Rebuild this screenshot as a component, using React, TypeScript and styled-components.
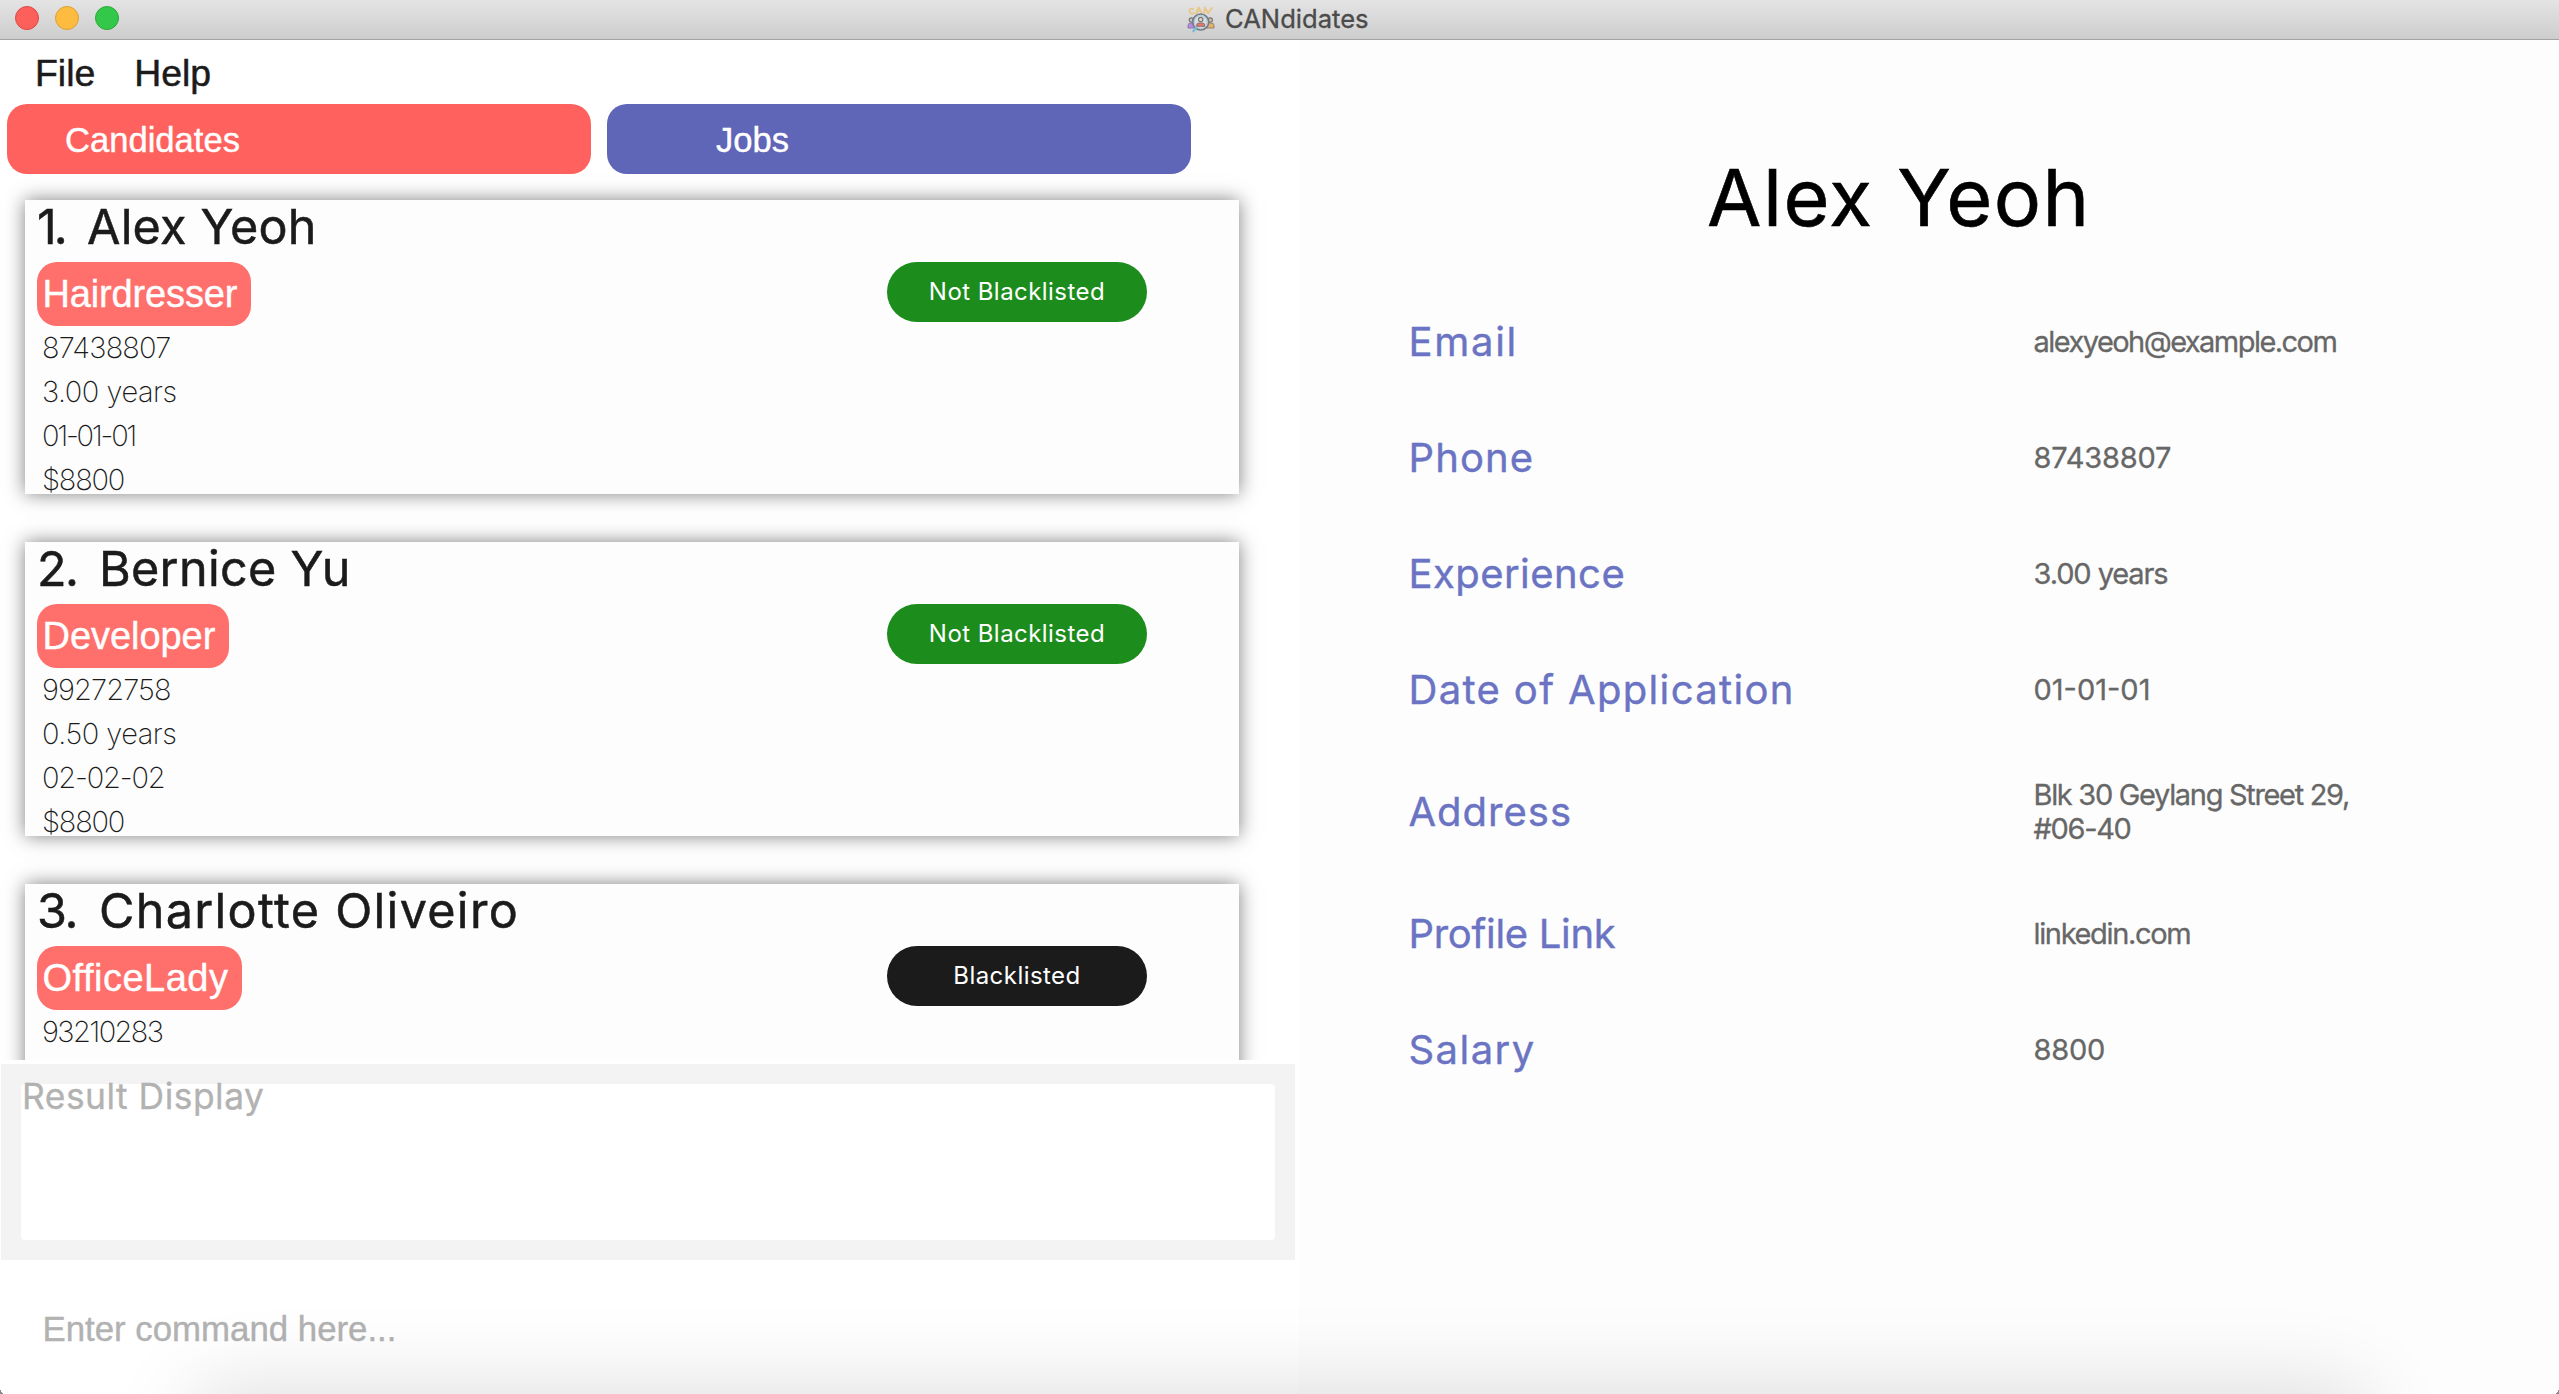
import React from "react";
import styled, { createGlobalStyle } from "styled-components";

const GlobalStyle = createGlobalStyle`
  * { box-sizing: border-box; }
  body { margin: 0; background: #fff; font-family: Inter, "Liberation Sans", sans-serif; }
`;

const sans = `"Liberation Sans", Arial, sans-serif`;

const Window = styled.div`
  position: relative;
  width: 2559px;
  height: 1394px;
  display: flex;
  flex-direction: column;
  overflow: hidden;
  background: #fff;
`;

const TitleBar = styled.header`
  flex: none;
  height: 40px;
  display: grid;
  grid-template-columns: 1187px auto 1fr;
  align-items: center;
  background: linear-gradient(#e4e4e4, #cdcdcd);
  border-bottom: 1px solid #a3a3a3;
`;

const Lights = styled.div`
  display: flex;
  gap: 16px;
  padding: 0 0 3px 15px;
`;

const Light = styled.span<{ $fill: string; $edge: string }>`
  width: 24px;
  height: 24px;
  border-radius: 50%;
  background: ${(p) => p.$fill};
  border: 1px solid ${(p) => p.$edge};
`;

const WindowTitle = styled.div`
  display: flex;
  align-items: center;
  gap: 10px;
  color: #4b4b4b;
  font-size: 25.6px;
  line-height: 38px;
  white-space: nowrap;
  padding-bottom: 1px;
  -webkit-text-stroke: 0.3px #4b4b4b;

  svg { display: block; }
`;

const Body = styled.div`
  flex: 1;
  min-height: 0;
  display: grid;
  grid-template-columns: 1299px 1fr;
`;

const LeftPane = styled.main`
  display: flex;
  flex-direction: column;
  min-height: 0;
`;

const MenuBar = styled.nav`
  flex: none;
  height: 64px;
  display: flex;
  gap: 39px;
  padding: 11px 0 0 35px;
  font-family: ${sans};
  font-size: 37.4px;
  line-height: 44px;
  color: #1b1b1b;
  -webkit-text-stroke: 0.5px #1b1b1b;
`;

const Tabs = styled.div`
  flex: none;
  display: flex;
  gap: 16px;
  padding-left: 7px;
`;

const Tab = styled.div<{ $color: string; $indent: number }>`
  width: 584px;
  height: 70px;
  border-radius: 20px;
  padding-left: ${(p) => p.$indent}px;
  background: ${(p) => p.$color};
  color: #fff;
  font-family: ${sans};
  font-size: 34.6px;
  line-height: 73px;
  -webkit-text-stroke: 0.4px #fff;
`;

const CardList = styled.section`
  flex: none;
  height: 886px;
  overflow: hidden;
  display: flex;
  flex-direction: column;
  gap: 48px;
  padding: 26px 60px 0 25px;
`;

const Card = styled.article`
  flex: none;
  height: 294px;
  display: grid;
  grid-template-columns: 1fr 260px;
  padding: 0 92px 0 12px;
  background: #fdfdfd;
  box-shadow: 0 0 18px rgba(0, 0, 0, 0.5);
`;

const Name = styled.h2<{ $tracking: number }>`
  margin: 0;
  height: 62px;
  display: flex;
  font-size: 48.5px;
  font-weight: 400;
  line-height: 53px;
  letter-spacing: ${(p) => p.$tracking}px;
  color: #1b1b1b;
  white-space: nowrap;
  -webkit-text-stroke: 0.5px #1b1b1b;
`;

const Index = styled.span<{ $narrow: boolean }>`
  flex: none;
  width: ${(p) => (p.$narrow ? 50 : 62)}px;
  letter-spacing: ${(p) => (p.$narrow ? -3 : -1.5)}px;
`;

const Tag = styled.div<{ $tracking: number }>`
  width: max-content;
  height: 64px;
  border-radius: 20px;
  padding: 0 14px 0 5.5px;
  background: #ff6f6b;
  color: #fff;
  font-family: ${sans};
  font-size: 38px;
  line-height: 65px;
  letter-spacing: ${(p) => p.$tracking}px;
  -webkit-text-stroke: 0.4px #fff;
`;

const Details = styled.ul`
  list-style: none;
  margin: 0;
  padding: 0 0 0 5px;
`;

const Detail = styled.li<{ $tracking: number }>`
  height: 44px;
  font-size: 29px;
  font-weight: 200;
  line-height: 44px;
  letter-spacing: ${(p) => p.$tracking}px;
  color: #1b1b1b;
`;

const Pill = styled.div<{ $blacklisted?: boolean; $tracking: number }>`
  height: 60px;
  margin-top: 62px;
  border-radius: 30px;
  background: ${(p) => (p.$blacklisted ? "#1b1b1b" : "#1c8d1c")};
  color: #fff;
  font-size: 24px;
  line-height: 60px;
  letter-spacing: ${(p) => p.$tracking}px;
  text-align: center;
`;

const ResultPanel = styled.section`
  flex: none;
  width: 1294px;
  height: 196px;
  margin: 4px 0 0 1px;
  padding: 20px;
  background: #f3f3f3;
`;

const ResultBox = styled.div`
  height: 156px;
  border-radius: 4px;
  padding-left: 1px;
  background: #fff;
  color: #b2b2b2;
  font-size: 35.4px;
  line-height: 26px;
  letter-spacing: 0.5px;
  -webkit-text-stroke: 0.3px #b2b2b2;
`;

const CommandLine = styled.div`
  flex: 1;
  padding: 46px 0 0 42.5px;
  color: #b2b2b2;
  font-family: ${sans};
  font-size: 34.8px;
  line-height: 46px;
  -webkit-text-stroke: 0.4px #b2b2b2;
`;

const DetailPane = styled.aside`
  background: #fdfdfd;
`;

const Title = styled.h1`
  margin: 0;
  height: 244px;
  padding: 107px 0 0 408px;
  color: #000;
  font-size: 79px;
  font-weight: 400;
  line-height: 100px;
  letter-spacing: 1.4px;
  -webkit-text-stroke: 0.6px #000;
`;

const Field = styled.div<{ $tall?: boolean }>`
  height: ${(p) => (p.$tall ? 128 : 116)}px;
  display: grid;
  grid-template-columns: 625px 380px;
  align-items: center;
  padding-left: 109.5px;
`;

const Label = styled.div<{ $tracking: number }>`
  color: #6b74c3;
  font-size: 40px;
  line-height: 50px;
  letter-spacing: ${(p) => p.$tracking}px;
  padding-bottom: 1px;
  -webkit-text-stroke: 0.4px #6b74c3;
`;

const Value = styled.div<{ $tracking: number }>`
  color: #676767;
  font-size: 29px;
  line-height: 34px;
  letter-spacing: ${(p) => p.$tracking}px;
  white-space: pre-line;
  -webkit-text-stroke: 0.3px #676767;
`;

const DockShadow = styled.div`
  position: absolute;
  left: 200px;
  right: 200px;
  top: 1394px;
  height: 200px;
  border-radius: 20px;
  pointer-events: none;
  box-shadow: 0 0 84px 8px rgba(0, 0, 0, 0.13);
`;

const Corner = styled.span<{ $side: "left" | "right" }>`
  position: absolute;
  bottom: 0;
  ${(p) => p.$side}: 0;
  width: 4px;
  height: 7px;
  background: radial-gradient(
    ellipse 100% 100% at ${(p) => (p.$side === "left" ? "100% 0" : "0 0")},
    transparent 96%,
    #8a8a8a 100%
  );
`;

const AppIcon = () => (
  <svg width="28" height="28" viewBox="0 0 28 28" fill="none">
    <g stroke="#e8c887" strokeWidth="1.9" strokeLinecap="round" strokeLinejoin="round">
      <path d="M6 4.2C3.6 3 1.6 4.800 2.800 7.200C3.600 8.800 5.200 9.200 6.800 8" />
      <path d="M9.200 8.600L11.500 2.500L14.500 7.600M10.400 6.400L13.400 5.600" />
      <path d="M17.200 7.800L17.800 2.400L21.300 8.300L24.800 3" />
    </g>
    <circle cx="4.400" cy="15" r="2.200" fill="#c9c6c2" stroke="#777" strokeWidth="1.200" />
    <circle cx="23.200" cy="15" r="2.200" fill="#dcc0a8" stroke="#777" strokeWidth="1.200" />
    <path d="M1 23V20.500Q1 18 4 18H8V23Z" fill="#b48be0" stroke="#8d78a8" />
    <path d="M27 23V20.500Q27 18 24 18H20V23Z" fill="#e0b070" stroke="#9b8266" />
    <circle cx="13.700" cy="17" r="8" fill="#d9dee2" stroke="#747c84" strokeWidth="1.700" />
    <circle cx="13.700" cy="17" r="6.400" stroke="#a9c6d8" strokeWidth="1" />
    <circle cx="13.700" cy="14.500" r="2.200" fill="#ead5ca" stroke="#777" strokeWidth="1.200" />
    <path d="M9.700 21.300V20Q9.700 18 12 18H15.400Q17.700 18 17.700 20V21.300Z" fill="#e0786e" stroke="#8c6864" strokeWidth="0.900" />
    <path d="M8.600 23.500L6.500 26" stroke="#79bbdd" strokeWidth="2.600" strokeLinecap="round" />
  </svg>
);

type Text = [value: string, tracking: number];

interface Candidate {
  name: Text;
  tag: Text;
  details: Text[];
  blacklisted?: boolean;
}

const candidates: Candidate[] = [
  {
    name: ["Alex Yeoh", 0.2],
    tag: ["Hairdresser", -0.15],
    details: [["87438807", -0.8], ["3.00 years", -0.5], ["01-01-01", -2.3], ["$8800", -1.2]],
  },
  {
    name: ["Bernice Yu", 0.3],
    tag: ["Developer", -0.05],
    details: [["99272758", -0.9], ["0.50 years", -0.5], ["02-02-02", -1.2], ["$8800", -1.2]],
  },
  {
    name: ["Charlotte Oliveiro", 1.3],
    tag: ["OfficeLady", 0.5],
    details: [["93210283", -1.6]],
    blacklisted: true,
  },
];

const fields: { label: Text; value: Text; tall?: boolean }[] = [
  { label: ["Email", 1.7], value: ["alexyeoh@example.com", -1.55] },
  { label: ["Phone", 1.1], value: ["87438807", -0.2] },
  { label: ["Experience", 0.45], value: ["3.00 years", -1.1] },
  { label: ["Date of Application", 1.35], value: ["01-01-01", 0] },
  { label: ["Address", 1], value: ["Blk 30 Geylang Street 29,\n#06-40", -1.32], tall: true },
  { label: ["Profile Link", -0.3], value: ["linkedin.com", -1.35] },
  { label: ["Salary", 1.45], value: ["8800", -0.2] },
];

export default function App() {
  return (
    <Window>
      <GlobalStyle />
      <TitleBar>
        <Lights>
          <Light $fill="#fc605b" $edge="#df4744" />
          <Light $fill="#fdbc40" $edge="#de9f34" />
          <Light $fill="#34c84a" $edge="#27aa35" />
        </Lights>
        <WindowTitle>
          <AppIcon />
          CANdidates
        </WindowTitle>
      </TitleBar>
      <Body>
        <LeftPane>
          <MenuBar>
            <span>File</span>
            <span>Help</span>
          </MenuBar>
          <Tabs>
            <Tab $color="#ff625e" $indent={58}>Candidates</Tab>
            <Tab $color="#5f65b7" $indent={109}>Jobs</Tab>
          </Tabs>
          <CardList>
            {candidates.map((c, i) => (
              <Card key={c.name[0]}>
                <div>
                  <Name $tracking={c.name[1]}>
                    <Index $narrow={i === 0}>{i + 1}.</Index>
                    <span>{c.name[0]}</span>
                  </Name>
                  <Tag $tracking={c.tag[1]}>{c.tag[0]}</Tag>
                  <Details>
                    {c.details.map(([text, tracking]) => (
                      <Detail key={text} $tracking={tracking}>{text}</Detail>
                    ))}
                  </Details>
                </div>
                <Pill $blacklisted={c.blacklisted} $tracking={0.45}>
                  {c.blacklisted ? "Blacklisted" : "Not Blacklisted"}
                </Pill>
              </Card>
            ))}
          </CardList>
          <ResultPanel>
            <ResultBox>Result Display</ResultBox>
          </ResultPanel>
          <CommandLine>Enter command here...</CommandLine>
        </LeftPane>
        <DetailPane>
          <Title>Alex Yeoh</Title>
          {fields.map((f) => (
            <Field key={f.label[0]} $tall={f.tall}>
              <Label $tracking={f.label[1]}>{f.label[0]}</Label>
              <Value $tracking={f.value[1]}>{f.value[0]}</Value>
            </Field>
          ))}
        </DetailPane>
      </Body>
      <DockShadow />
      <Corner $side="left" />
      <Corner $side="right" />
    </Window>
  );
}
